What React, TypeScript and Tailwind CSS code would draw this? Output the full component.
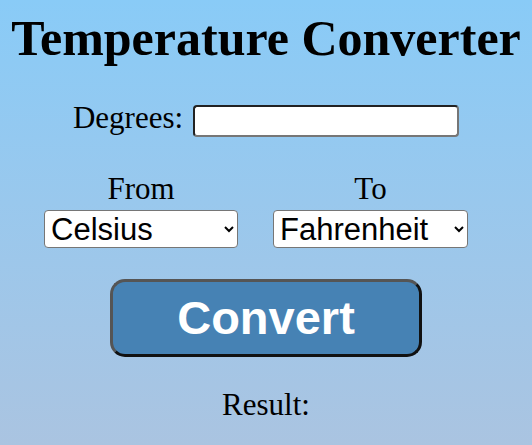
export default function App() {
  return (
    <div className="min-h-screen bg-gradient-to-b from-[#89cbf7] to-[#aac4e1] font-['Liberation_Serif','Times_New_Roman',serif] text-black">
      <div className="flex flex-col items-center pt-[11px]">
        <h1 className="text-[50px] leading-[55px] font-bold">Temperature Converter</h1>

        {/* Degrees input */}
        <div className="mt-[34px] flex items-start gap-[10px]">
          <label className="text-[31px] leading-[35px]">Degrees:</label>
          <input
            type="text"
            className="mt-[5px] h-[32px] w-[266px] rounded-[4px] border-2 border-t-[#222] border-l-[#222] border-r-[#767676] border-b-[#767676] bg-white px-1 font-['Liberation_Sans',Arial,sans-serif] text-[16px] outline-none"
          />
        </div>

        {/* Unit pickers */}
        <div className="mt-[34px] flex gap-[35px] pr-[20px]">
          <div className="flex flex-col items-center gap-[4px]">
            <span className="text-[31px] leading-[35px]">From</span>
            <select
              defaultValue="celsius"
              className="h-[38px] w-[194px] rounded-[4px] border border-[#767676] bg-white pl-[2px] font-['Liberation_Sans',Arial,sans-serif] text-[31px]"
            >
              <option value="celsius">Celsius</option>
              <option value="fahrenheit">Fahrenheit</option>
              <option value="kelvin">Kelvin</option>
            </select>
          </div>
          <div className="flex flex-col items-center gap-[4px]">
            <span className="text-[31px] leading-[35px]">To</span>
            <select
              defaultValue="fahrenheit"
              className="h-[38px] w-[195px] rounded-[4px] border border-[#767676] bg-white pl-[2px] font-['Liberation_Sans',Arial,sans-serif] text-[31px]"
            >
              <option value="celsius">Celsius</option>
              <option value="fahrenheit">Fahrenheit</option>
              <option value="kelvin">Kelvin</option>
            </select>
          </div>
        </div>

        <button className="mt-[31px] flex h-[78px] w-[312px] items-center justify-center rounded-[15px] border-[3px] border-t-[#555] border-l-[#555] border-r-[#111] border-b-[#111] bg-[#4682b4] font-['Liberation_Sans',Arial,sans-serif] text-[47px] font-bold text-white">
          Convert
        </button>

        <p className="mt-[30px] text-[31px] leading-[35px]">Result:</p>
      </div>
    </div>
  );
}
